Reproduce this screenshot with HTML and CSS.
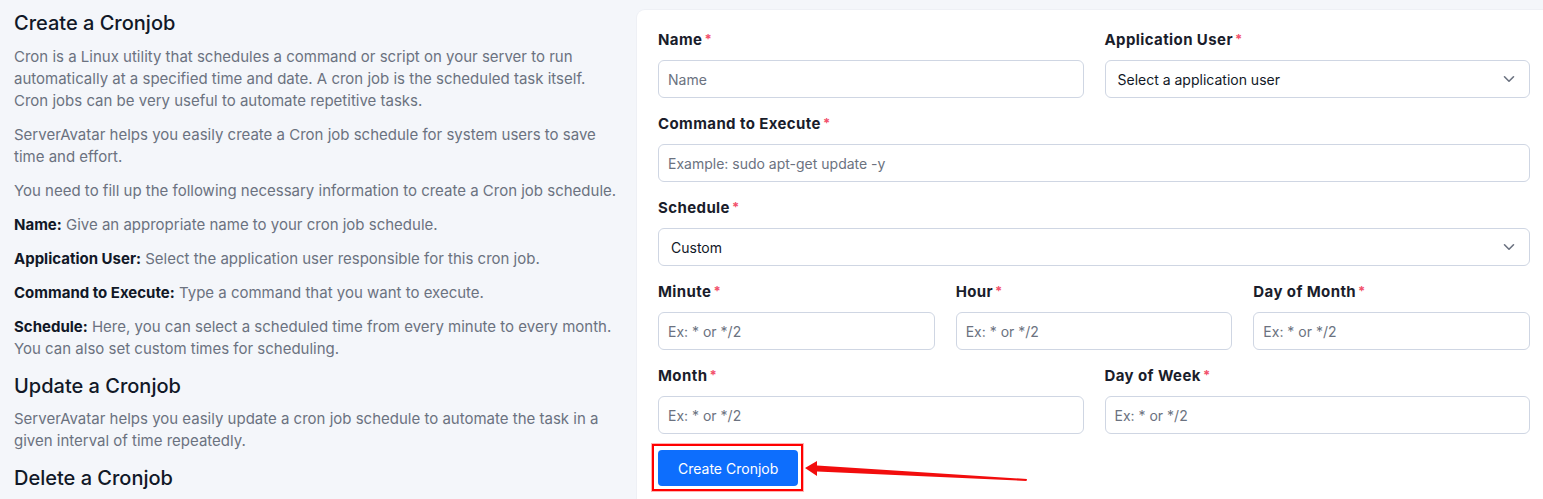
FILE: index.html
```html
<!DOCTYPE html>
<html>
<head>
<meta charset="utf-8">
<link rel="stylesheet" href="styles.css">
</head>
<body>
<div class="layout">
  <aside class="docs">
    <h2>Create a Cronjob</h2>
    <p>Cron is a Linux utility that schedules a command or script on your server to run automatically at a specified time and date. A cron job is the scheduled task itself. Cron jobs can be very useful to automate repetitive tasks.</p>
    <p>ServerAvatar helps you easily create a Cron job schedule for system users to save time and effort.</p>
    <p>You need to fill up the following necessary information to create a Cron job schedule.</p>
    <p><b>Name:</b> Give an appropriate name to your cron job schedule.</p>
    <p><b>Application User:</b> Select the application user responsible for this cron job.</p>
    <p><b>Command to Execute:</b> Type a command that you want to execute.</p>
    <p><b>Schedule:</b> Here, you can select a scheduled time from every minute to every month. You can also set custom times for scheduling.</p>
    <h2>Update a Cronjob</h2>
    <p>ServerAvatar helps you easily update a cron job schedule to automate the task in a given interval of time repeatedly.</p>
    <h2>Delete a Cronjob</h2>
  </aside>

  <main class="card">
    <form class="form">
      <div class="row cols-2">
        <div class="field">
          <label class="label">Name<span class="req">*</span></label>
          <input class="input" type="text" placeholder="Name">
        </div>
        <div class="field">
          <label class="label">Application User<span class="req">*</span></label>
          <div class="select">
            <span>Select a application user</span>
            <svg class="chev" width="12" height="8" viewBox="0 0 12 8"><path d="M1.5 1.75 6 6.25l4.5-4.5" fill="none" stroke="#6b7280" stroke-width="1.6" stroke-linecap="round" stroke-linejoin="round"/></svg>
          </div>
        </div>
      </div>

      <div class="row">
        <div class="field">
          <label class="label">Command to Execute<span class="req">*</span></label>
          <input class="input" type="text" placeholder="Example: sudo apt-get update -y">
        </div>
      </div>

      <div class="row">
        <div class="field">
          <label class="label">Schedule<span class="req">*</span></label>
          <div class="select">
            <span>Custom</span>
            <svg class="chev" width="12" height="8" viewBox="0 0 12 8"><path d="M1.5 1.75 6 6.25l4.5-4.5" fill="none" stroke="#6b7280" stroke-width="1.6" stroke-linecap="round" stroke-linejoin="round"/></svg>
          </div>
        </div>
      </div>

      <div class="row cols-3">
        <div class="field">
          <label class="label">Minute<span class="req">*</span></label>
          <input class="input" type="text" placeholder="Ex: * or */2">
        </div>
        <div class="field">
          <label class="label">Hour<span class="req">*</span></label>
          <input class="input" type="text" placeholder="Ex: * or */2">
        </div>
        <div class="field">
          <label class="label">Day of Month<span class="req">*</span></label>
          <input class="input" type="text" placeholder="Ex: * or */2">
        </div>
      </div>

      <div class="row cols-2">
        <div class="field">
          <label class="label">Month<span class="req">*</span></label>
          <input class="input" type="text" placeholder="Ex: * or */2">
        </div>
        <div class="field">
          <label class="label">Day of Week<span class="req">*</span></label>
          <input class="input" type="text" placeholder="Ex: * or */2">
        </div>
      </div>

      <div class="actions">
        <div class="btn-wrap">
          <button class="btn" type="button">Create Cronjob</button>
          <svg class="arrow" width="226" height="26" viewBox="0 0 226 26"><polygon points="0,10 12,3 12,7.5 222,21 221.5,23 12,13.5 12,18" fill="#f20d0d"/></svg>
        </div>
      </div>
    </form>
  </main>
</div>
</body>
</html>
```
FILE: styles.css
```css
* { box-sizing: border-box; }

html, body {
  margin: 0;
  height: 100%;
  overflow: hidden;
}

body {
  background: #f4f6fa;
  font-family: Inter, "Noto Sans", sans-serif;
  color: #6b7280;
}

.layout {
  display: flex;
  align-items: flex-start;
  gap: 19px;
  padding-left: 14px;
}

/* left documentation column */
.docs {
  width: 604px;
  flex: none;
  padding-top: 9px;
}

.docs h2 {
  margin: 0 0 8px;
  font-size: 20px;
  line-height: 28px;
  font-weight: 500;
  color: #111827;
}

.docs h2:first-child {
  margin-bottom: 9px;
}

.docs p {
  margin: 0 0 12px;
  font-size: 15px;
  line-height: 22px;
  color: #6b7280;
}

.docs p b {
  font-weight: 700;
  color: #111827;
}

/* form card */
.card {
  flex: 1;
  margin-top: 10px;
  min-height: 520px;
  background: #fff;
  border-radius: 8px 0 0 0;
  box-shadow: 0 0 0 1px #eef0f5;
  padding: 20px 13px 20px 21px;
}

.form {
  display: flex;
  flex-direction: column;
  gap: 16px;
}

.row {
  display: grid;
  grid-template-columns: 1fr;
  gap: 21px;
}

.row.cols-2 { grid-template-columns: 1fr 1fr; }
.row.cols-3 { grid-template-columns: 1fr 1fr 1fr; }

.field {
  display: flex;
  flex-direction: column;
  gap: 10px;
}

.label {
  display: block;
  height: 20px;
  font-size: 15px;
  line-height: 20px;
  font-weight: 700;
  letter-spacing: 0.4px;
  color: #1a1d2b;
}

.req {
  position: relative;
  top: -1px;
  color: #f2506b;
  font-size: 13px;
  line-height: 0;
  margin-left: 2px;
  letter-spacing: 0;
}

.input,
.select {
  width: 100%;
  height: 38px;
  border: 1px solid #cfd6e3;
  border-radius: 6px;
  background: #fff;
  font-family: Inter, "Noto Sans", sans-serif;
  font-size: 14px;
}

.input {
  padding: 0 9px;
  color: #111827;
  outline: none;
}

.input::placeholder {
  color: #6b7280;
  opacity: 1;
}

.select {
  display: flex;
  align-items: center;
  justify-content: space-between;
  padding: 0 14px 0 12px;
  color: #111827;
}

.chev { display: block; }

.actions {
  display: flex;
}

.btn-wrap {
  position: relative;
}

.btn-wrap::before {
  content: "";
  position: absolute;
  left: -6px;
  top: -6px;
  right: -5px;
  bottom: -5px;
  border: 2px solid #f00;
  box-shadow: 0 0 0 1px #ffb3b3;
  pointer-events: none;
}

.btn {
  display: block;
  height: 36px;
  padding: 0 20px;
  border: 0;
  border-radius: 4px;
  background: #0d6efd;
  color: #fff;
  font-family: Inter, "Noto Sans", sans-serif;
  font-size: 14px;
  font-weight: 400;
}

.arrow {
  position: absolute;
  left: 147px;
  top: 8px;
}
```
